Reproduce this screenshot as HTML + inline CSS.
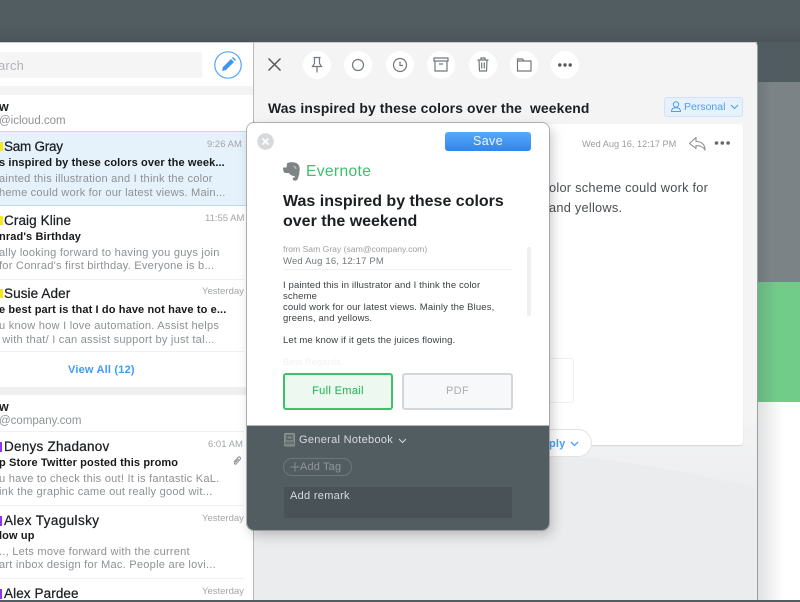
<!DOCTYPE html>
<html>
<head>
<meta charset="utf-8">
<style>
html,body{margin:0;padding:0}
body{width:800px;height:600px;overflow:hidden;position:relative;background:#525d62;font-family:"Liberation Sans",sans-serif;color:#1c1f22}
div,span,svg{position:absolute}
.t{white-space:nowrap;line-height:16px}
.n{font-size:13.5px;color:#1c1f22;-webkit-text-stroke:.25px #1c1f22;letter-spacing:.1px}
.s{font-size:11px;font-weight:bold;color:#17191b;letter-spacing:.12px}
.p{font-size:11.1px;color:#8d9195;letter-spacing:.22px}
.d{font-size:9.5px;color:#a3a6a9}
.b{left:0;width:244px;height:1px;background:#f0f1f2}
.c{width:28px;height:28px;border-radius:50%;background:#fff;top:51px}
.i{fill:none;stroke:#73787c;stroke-width:1.2}
.m{font-size:9.5px;color:#3d4144;letter-spacing:.13px;left:283px}
.y{left:0;width:3px;height:9px;background:#f8e71c}
.v{left:0;width:2px;height:10px;background:#9333ee}
</style>
</head>
<body>
<!-- backdrop -->
<div style="left:0;top:0;width:800px;height:42px;background:linear-gradient(#525d62 0,#525d62 24px,#4b5559 42px)"></div>
<div style="left:757px;top:42px;width:43px;height:40px;background:#515c61"></div>
<div style="left:757px;top:82px;width:43px;height:200px;background:linear-gradient(90deg,#6f777b,#7b8387 14px)"></div>
<div style="left:757px;top:282px;width:43px;height:120px;background:linear-gradient(90deg,#66b27e,#71cc8a 20px)"></div>
<div style="left:757px;top:402px;width:43px;height:198px;background:linear-gradient(90deg,#dfe0e1,#fff 26px)"></div>

<!-- window -->
<div style="left:0;top:42px;width:757px;height:558px;background:#f4f4f5;border-radius:0 4px 0 0;overflow:hidden;box-shadow:1px 0 0 #9a9c9e">
  <div style="left:254px;top:380px;width:503px;height:178px;background:linear-gradient(#f3f3f4,#edeef0 70px)"></div>
  <svg style="left:254px;top:400px" width="503" height="158" viewBox="0 0 503 158"><path d="M0 14H300C370 16 430 30 503 46V158H0Z" fill="#ebecee"/></svg>
</div>
<div style="left:0;top:42px;width:757px;height:1px;background:#c9cbcc"></div>

<!-- sidebar -->
<div style="left:0;top:43px;width:253px;height:557px;background:#fff"></div>
<div style="left:253px;top:42px;width:1px;height:558px;background:#b7b9ba"></div>
<div style="left:0;top:52px;width:202px;height:26px;background:#f5f5f6;border-radius:2px"></div>
<div class="t" style="left:-2px;top:58px;font-size:13px;color:#b0b3b6;letter-spacing:.2px">arch</div>
<svg style="left:214px;top:51px" width="28" height="28" viewBox="0 0 28 28"><circle cx="14" cy="14" r="13.2" fill="#fff" stroke="#55a7f7" stroke-width="1.2"/><path d="M8 20l1-4 8-8 3 3-8 8z" fill="#3d95ee"/><path d="M18 7l1-1 3 3-1 1z" fill="#3d95ee"/></svg>
<div style="left:0;top:86px;width:253px;height:9px;background:#f3f3f4"></div>

<div class="t" style="left:-1px;top:99px;font-size:12.5px;font-weight:bold;color:#1c1f22">w</div>
<div class="t" style="left:-1px;top:113px;font-size:11.5px;color:#8f9397">@icloud.com</div>

<!-- selected -->
<div style="left:0;top:131px;width:246px;height:75px;background:#e6f2fb;border-top:1px solid #b5dbf6;border-bottom:1px solid #b5dbf6;box-sizing:border-box"></div>
<div class="y" style="top:142px"></div>
<div class="t n" style="left:4px;top:139px;letter-spacing:-.25px">Sam Gray</div>
<div class="t d" style="left:207px;top:137px">9:26 AM</div>
<div class="t s" style="left:-1px;top:155px">s inspired by these colors over the week...</div>
<div class="t p" style="left:-1px;top:171px">ainted this illustration and I think the color</div>
<div class="t p" style="left:-1px;top:185px;letter-spacing:.17px">heme could work for our latest views. Main...</div>

<div class="y" style="top:216px"></div>
<div class="t n" style="left:4px;top:213px">Craig Kline</div>
<div class="t d" style="left:205px;top:211px">11:55 AM</div>
<div class="t s" style="left:-1px;top:229px">nrad's Birthday</div>
<div class="t p" style="left:-1px;top:245px">ally looking forward to having you guys join</div>
<div class="t p" style="left:-1px;top:258px">for Conrad's first birthday. Everyone is b...</div>
<div class="b" style="top:279px"></div>

<div class="y" style="top:289px"></div>
<div class="t n" style="left:4px;top:286px">Susie Ader</div>
<div class="t d" style="left:202px;top:284px">Yesterday</div>
<div class="t s" style="left:-1px;top:302px">e best part is that I do have not have to e...</div>
<div class="t p" style="left:-1px;top:318px">u know how I love automation. Assist helps</div>
<div class="t p" style="left:-1px;top:332px">&nbsp;with that/ I can assist support by just tal...</div>
<div class="b" style="top:351px"></div>

<div class="t" style="left:68px;top:362px;font-size:11px;font-weight:bold;color:#3f9bf3;letter-spacing:.2px">View All (12)</div>
<div style="left:0;top:387px;width:246px;height:8px;background:#efeff0"></div>

<div class="t" style="left:-1px;top:399px;font-size:12.5px;font-weight:bold;color:#1c1f22">w</div>
<div class="t" style="left:-1px;top:413px;font-size:11.5px;color:#8f9397">@company.com</div>
<div class="b" style="top:431px"></div>

<div class="v" style="top:442px"></div>
<div class="t n" style="left:4px;top:439px;letter-spacing:.25px">Denys Zhadanov</div>
<div class="t d" style="left:208px;top:437px">6:01 AM</div>
<div class="t s" style="left:-1px;top:455px">p Store Twitter posted this promo</div>
<svg style="left:232px;top:455px" width="11" height="12" viewBox="0 0 11 12"><path d="M2 7l4-4.500c1.500-1.500 3.500.5 2 2L4 9c-.8.8-2-.3-1.200-1.200L6.500 4" fill="none" stroke="#93979a" stroke-width="1.100"/></svg>
<div class="t p" style="left:-1px;top:471px">u have to check this out! It is fantastic KaL.</div>
<div class="t p" style="left:-1px;top:484px">ink the graphic came out really good wit...</div>
<div class="b" style="top:505px"></div>

<div class="v" style="top:516px"></div>
<div class="t n" style="left:4px;top:513px;letter-spacing:.4px">Alex Tyagulsky</div>
<div class="t d" style="left:202px;top:511px">Yesterday</div>
<div class="t s" style="left:-1px;top:528px">low up</div>
<div class="t p" style="left:-1px;top:544px">.., Lets move forward with the current</div>
<div class="t p" style="left:-1px;top:557px">art inbox design for Mac. People are lovi...</div>
<div class="b" style="top:578px"></div>

<div class="v" style="top:589px"></div>
<div class="t n" style="left:4px;top:586px">Alex Pardee</div>
<div class="t d" style="left:202px;top:584px">Yesterday</div>

<!-- toolbar -->
<svg style="left:267px;top:57px" width="15" height="15" viewBox="0 0 15 15"><path d="M1.500 1.500l12 12M13.500 1.500l-12 12" stroke="#54595d" stroke-width="1.500" fill="none"/></svg>
<div class="c" style="left:303px"></div><div class="c" style="left:344px"></div><div class="c" style="left:386px"></div><div class="c" style="left:427px"></div><div class="c" style="left:469px"></div><div class="c" style="left:510px"></div><div class="c" style="left:551px"></div>
<svg style="left:303px;top:51px" width="28" height="28" viewBox="0 0 28 28"><path class="i" d="M10.500 6.500h7M11.500 6.500v6l-2 3h9l-2-3v-6M14 15.500v6"/></svg>
<svg style="left:344px;top:51px" width="28" height="28" viewBox="0 0 28 28"><circle class="i" cx="14" cy="14" r="5.500"/></svg>
<svg style="left:386px;top:51px" width="28" height="28" viewBox="0 0 28 28"><circle class="i" cx="14" cy="14" r="6.500"/><path class="i" d="M14 10.500v4h3"/></svg>
<svg style="left:427px;top:51px" width="28" height="28" viewBox="0 0 28 28"><path class="i" d="M7 7h14v3H7zM8 10v10h12V10M12 13h4"/></svg>
<svg style="left:469px;top:51px" width="28" height="28" viewBox="0 0 28 28"><path class="i" d="M8.500 9h11M12 9V7h4v2M10 9l.5 11h7l.5-11M12.700 11.500v6M15.300 11.500v6"/></svg>
<svg style="left:510px;top:51px" width="28" height="28" viewBox="0 0 28 28"><path class="i" d="M7.500 8h5l1.500 2h7v10h-13.500zM7.500 10h6.500"/></svg>
<svg style="left:551px;top:51px" width="28" height="28" viewBox="0 0 28 28"><circle cx="8.800" cy="14" r="1.700" fill="#54595d"/><circle cx="14" cy="14" r="1.700" fill="#54595d"/><circle cx="19.200" cy="14" r="1.700" fill="#54595d"/></svg>

<div class="t" style="left:268px;top:100px;font-size:13.9px;font-weight:bold;color:#1c1f22;letter-spacing:.12px;white-space:pre">Was inspired by these colors over the  weekend</div>

<div style="left:664px;top:97px;width:79px;height:20px;background:#e6f1fc;border:1px solid #cfe3f8;border-radius:3px;box-sizing:border-box"></div>
<svg style="left:670px;top:100px" width="12" height="14" viewBox="0 0 12 14"><circle cx="6" cy="4.500" r="2.700" fill="none" stroke="#4d9fef" stroke-width="1"/><path d="M1.500 11.500c0-3 2-3.700 4.500-3.700s4.500.7 4.500 3.700z" fill="none" stroke="#4d9fef" stroke-width="1"/></svg>
<div class="t" style="left:684px;top:99px;font-size:10.500px;color:#4d9fef;">Personal</div>
<svg style="left:730px;top:104px" width="9" height="6" viewBox="0 0 9 6"><path d="M1 1l3.500 3.500L8 1" fill="none" stroke="#4d9fef" stroke-width="1.100"/></svg>

<!-- message card -->
<div style="left:500px;top:124px;width:243px;height:321px;background:#fff;border-radius:3px;box-shadow:0 1px 1px #d4d5d7"></div>
<div class="t" style="left:582px;top:136px;font-size:9.200px;color:#9a9da1">Wed Aug 16, 12:17 PM</div>
<svg style="left:688px;top:136px" width="19" height="16" viewBox="0 0 19 16"><path d="M8 1.500L1.500 7.500 8 12.500V9.500c4 0 7 1 9 4.500 0-5-3-8.500-9-8.500z" fill="none" stroke="#8b8f93" stroke-width="1.100" stroke-linejoin="round"/></svg>
<svg style="left:714px;top:139px" width="17" height="8" viewBox="0 0 17 8"><circle cx="2.500" cy="4" r="1.800" fill="#65696d"/><circle cx="8.300" cy="4" r="1.800" fill="#65696d"/><circle cx="14.100" cy="4" r="1.800" fill="#65696d"/></svg>
<div class="t" style="left:549px;top:180px;font-size:12.800px;color:#4a4e52;letter-spacing:.24px">olor scheme could work for</div>
<div class="t" style="left:549px;top:200px;font-size:12.800px;color:#4a4e52;letter-spacing:.24px">and yellows.</div>
<div style="left:530px;top:358px;width:44px;height:45px;border:1px solid #f0f0f1;border-radius:3px;box-sizing:border-box"></div>
<div style="left:530px;top:429px;width:62px;height:28px;background:#fff;border:1px solid #e2e3e5;border-radius:0 14px 14px 0;box-sizing:border-box"></div>
<div class="t" style="left:549px;top:436px;font-size:11px;font-weight:bold;color:#4aa2f5;letter-spacing:.2px">ply</div>
<svg style="left:570px;top:441px" width="9" height="6" viewBox="0 0 9 6"><path d="M1 1l3.500 3.500L8 1" fill="none" stroke="#4aa2f5" stroke-width="1.300"/></svg>

<!-- popup -->
<div style="left:247px;top:123px;width:302px;height:407px;border-radius:7px;background:#fff;box-shadow:0 0 0 1px rgba(120,122,124,.55),3px 5px 12px rgba(0,0,0,.22);overflow:hidden">
  <div style="left:0;top:302px;width:302px;height:105px;background:#525d62;border-top:1px solid #b5b8ba;box-sizing:border-box"></div>
</div>
<svg style="left:257px;top:133px" width="17" height="17" viewBox="0 0 17 17"><circle cx="8.500" cy="8.500" r="8.300" fill="#d8d9da"/><path d="M5.500 5.500l6 6M11.500 5.500l-6 6" stroke="#fff" stroke-width="1.600"/></svg>
<div style="left:445px;top:132px;width:86px;height:19px;border-radius:3px;background:linear-gradient(#58a9f8,#2f86ec)"></div>
<div class="t" style="left:445px;top:133px;width:86px;text-align:center;font-size:12.500px;color:#eef6fe;letter-spacing:.4px">Save</div>
<svg style="left:283px;top:162px" width="17" height="20" viewBox="0 0 17 20"><path d="M4 1.500C5 .5 7 .3 9 .3c4 0 6.800 1.500 7.500 5 .5 3-.3 7-1 9.500-.5 2.200-1.500 4-3.500 4-1.500 0-2.300-1-2.300-2 0-1 .8-1.500 1.800-1.200l.3-1.600c-2.500 0-4.500-.8-5.800-3H2.500C1 11 .3 9 .2 7.500L0 5.500h3.500z" fill="#7e8386"/><path d="M10.500 4.500c1.800 0 2.500 1.200 2.500 2.700" fill="none" stroke="#c6c8ca" stroke-width="1"/></svg>
<div class="t" style="left:306px;top:164px;font-size:15.600px;color:#3bc16a;letter-spacing:.35px">Evernote</div>
<div class="t" style="left:283px;top:192px;font-size:16px;line-height:19.500px;font-weight:bold;color:#1c1f22;letter-spacing:0">Was inspired by these colors<br>over the weekend</div>
<div class="t" style="left:283px;top:241px;font-size:8.600px;color:#9b9ea2;letter-spacing:0">from Sam Gray (sam@company.com)</div>
<div class="t" style="left:283px;top:254px;font-size:9.500px;color:#75797d;letter-spacing:.17px">Wed Aug 16, 12:17 PM</div>
<div style="left:283px;top:269px;width:229px;height:1px;background:#f1f1f2"></div>
<div style="left:527px;top:247px;width:4px;height:69px;border-radius:2px;background:#eeeeef"></div>
<div class="t m" style="top:280px;line-height:11px">I painted this in illustrator and I think the color<br>scheme<br>could work for our latest views. Mainly the Blues,<br>greens, and yellows.<br><br>Let me know if it gets the juices flowing.</div>
<div class="t" style="left:283px;top:354px;font-size:9.300px;color:#f2f2f3;letter-spacing:.13px">Best Regards,</div>

<div style="left:283px;top:373px;width:110px;height:37px;background:#ecf8f0;border:2px solid #3fc169;border-radius:3px;box-sizing:border-box"></div>
<div class="t" style="left:283px;top:383px;width:110px;text-align:center;font-size:11px;color:#36bb62;letter-spacing:.35px;-webkit-text-stroke:.15px #36bb62">Full Email</div>
<div style="left:402px;top:373px;width:111px;height:37px;background:#f7f8f9;border:2px solid #d3d6d9;border-radius:3px;box-sizing:border-box"></div>
<div class="t" style="left:402px;top:383px;width:111px;text-align:center;font-size:11px;color:#a9adb2;letter-spacing:.35px">PDF</div>

<svg style="left:284px;top:433px" width="11" height="14" viewBox="0 0 11 14"><rect x=".5" y=".5" width="10" height="12.500" rx="1" fill="#79827f" stroke="#8b9396"/><rect x="3" y="2.500" width="5" height="4" fill="none" stroke="#525d62"/><path d="M.5 10h10" stroke="#525d62"/></svg>
<div class="t" style="left:299px;top:432px;font-size:11px;color:#d8dbdc;letter-spacing:.3px">General Notebook</div>
<svg style="left:398px;top:438px" width="9" height="6" viewBox="0 0 9 6"><path d="M1 1l3.500 3.500L8 1" fill="none" stroke="#d8dbdc" stroke-width="1"/></svg>
<div style="left:283px;top:458px;width:69px;height:18px;border:1px solid #6d777b;border-radius:9px;box-sizing:border-box"></div>
<svg style="left:290px;top:462px" width="10" height="10" viewBox="0 0 10 10"><path d="M5 .5v9M.5 5h9" stroke="#858d90" stroke-width="1"/></svg>
<div class="t" style="left:300px;top:459px;font-size:11px;color:#8e9699;letter-spacing:.15px">Add Tag</div>
<div style="left:284px;top:487px;width:228px;height:31px;background:#495256"></div>
<div class="t" style="left:290px;top:488px;font-size:11px;color:#d8dbdc;letter-spacing:.3px">Add remark</div>
</body>
</html>
